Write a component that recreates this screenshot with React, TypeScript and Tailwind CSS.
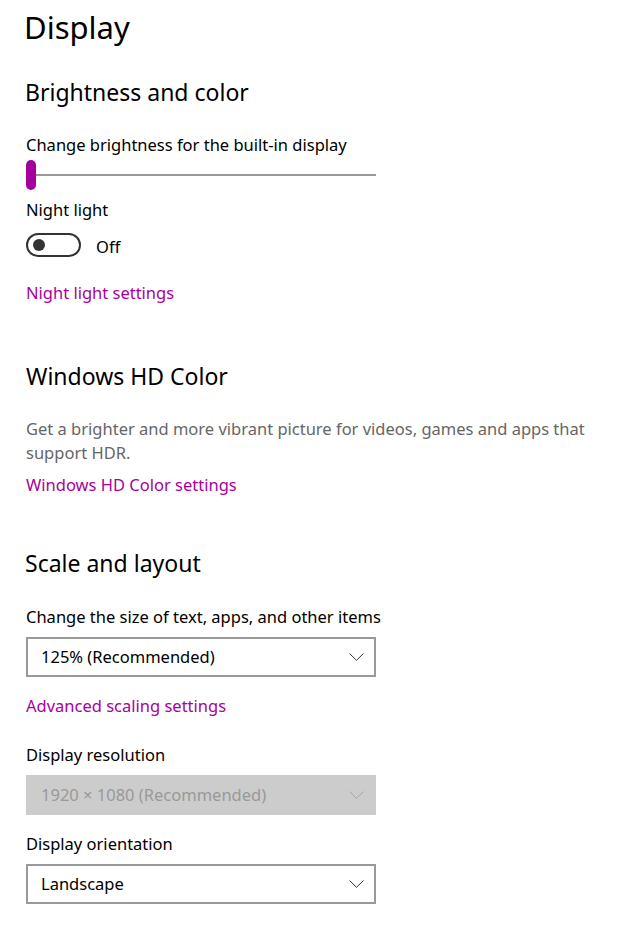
import React from "react";

function Chevron({ color }: { color: string }) {
  return (
    <svg width="15" height="8" viewBox="0 0 15 8" fill="none">
      <polyline points="0.5,0.5 7.5,7.3 14.5,0.5" stroke={color} strokeWidth="1" />
    </svg>
  );
}

function Select({ value, disabled }: { value: string; disabled?: boolean }) {
  return (
    <div
      className={
        disabled
          ? "w-[350px] h-[40px] border-2 border-[#cccccc] bg-[#cccccc] flex items-center justify-between pl-[13px] pr-[10px]"
          : "w-[350px] h-[40px] border-2 border-[#999999] bg-white flex items-center justify-between pl-[13px] pr-[10px]"
      }
    >
      <span className={disabled ? "text-[#999999] leading-[24px]" : "text-black leading-[24px]"}>{value}</span>
      <Chevron color={disabled ? "#a8a8a8" : "#333333"} />
    </div>
  );
}

export default function App() {
  return (
    <div className="w-[622px] min-h-[927px] bg-white px-[26px] font-['Noto_Sans',sans-serif] text-[16.5px] text-black">
      <h1 className="-ml-[2px] mt-[7px] text-[31px] leading-[40px] font-normal">Display</h1>

      <h2 className="-ml-[1px] mt-[29px] text-[23px] leading-[32px]">Brightness and color</h2>

      <div className="mt-[25px] leading-[24px]">Change brightness for the built-in display</div>

      <div className="mt-[3px] relative w-[350px] h-[30px] flex items-center">
        <div className="w-full h-[2px] bg-[#999999]" />
        <div className="absolute left-0 top-0 w-[10px] h-[30px] rounded-full bg-[#a4009c]" />
      </div>

      <div className="mt-[8px] leading-[24px]">Night light</div>

      <div className="mt-[11px] flex items-center gap-[15px] h-[24px]">
        <div className="w-[55px] h-[24px] rounded-full border-2 border-[#333333] flex items-center pl-[5px]">
          <div className="w-[12px] h-[12px] rounded-full bg-[#333333]" />
        </div>
        <span className="leading-[24px] pt-[3px]">Off</span>
      </div>

      <div className="mt-[24px] leading-[24px] text-[#a8009d]">Night light settings</div>

      <h2 className="mt-[55px] text-[23px] leading-[32px]">Windows HD Color</h2>

      <p className="mt-[25px] leading-[24px] text-[#666666]">
        Get a brighter and more vibrant picture for videos, games and apps that
        <br />
        support HDR.
      </p>

      <div className="mt-[8px] leading-[24px] text-[#a8009d]">Windows HD Color settings</div>

      <h2 className="-ml-[1px] mt-[50px] text-[23px] leading-[32px]">Scale and layout</h2>

      <div className="mt-[26px] leading-[24px]">Change the size of text, apps, and other items</div>
      <div className="mt-[8px]">
        <Select value="125% (Recommended)" />
      </div>

      <div className="mt-[17px] leading-[24px] text-[#a8009d]">Advanced scaling settings</div>

      <div className="mt-[25px] leading-[24px]">Display resolution</div>
      <div className="mt-[8px]">
        <Select value="1920 × 1080 (Recommended)" disabled />
      </div>

      <div className="mt-[17px] leading-[24px]">Display orientation</div>
      <div className="mt-[8px]">
        <Select value="Landscape" />
      </div>
    </div>
  );
}
